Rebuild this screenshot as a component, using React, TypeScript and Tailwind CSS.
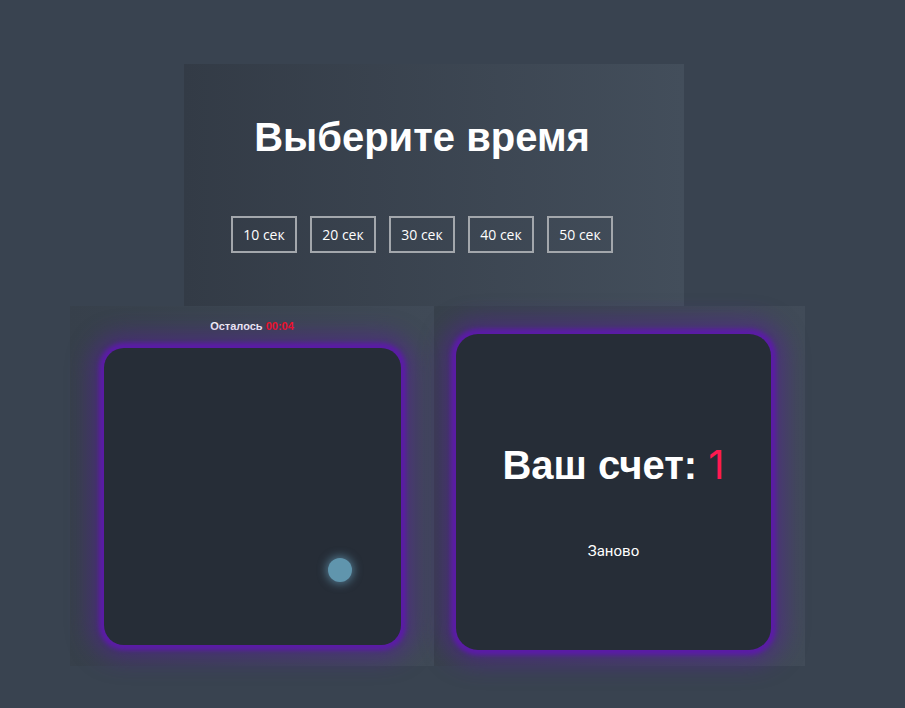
const times = [10, 20, 30, 40, 50];

const glow =
  "shadow-[0_0_4px_5px_#5b1ca6,0_0_22px_14px_rgba(88,28,160,0.5)]";

export default function App() {
  return (
    <div className="min-h-[708px] bg-[#394350] pt-[64px] font-['Liberation_Sans',Arial,sans-serif]">
      <div className="ml-[184px] flex h-[242px] w-[500px] flex-col items-center bg-gradient-to-r from-[#333b46] to-[#434e5b] pr-[24px] pt-[50px]">
        <h1 className="text-[40px] font-bold leading-[46px] text-white">Выберите время</h1>
        <div className="mt-[56px] flex gap-[13px]">
          {times.map((t) => (
            <button
              key={t}
              className="flex h-[37px] w-[66px] items-center justify-center border-2 border-[#a3a7ac] font-['Open_Sans',sans-serif] text-[14px] text-white"
            >
              {t} сек
            </button>
          ))}
        </div>
      </div>

      <div className="ml-[70px] flex">
        <div className="flex h-[360px] w-[364px] flex-col items-center bg-gradient-to-r from-[#37404b] to-[#404a57] pt-[14px]">
          <p className="text-[11px] font-bold leading-[13px] text-white">
            Осталось <span className="text-[#ff1020]">00:04</span>
          </p>
          <div className={`relative mt-[15px] h-[297px] w-[297px] rounded-[20px] bg-[#262d37] ${glow}`}>
            <div className="absolute left-[224px] top-[210px] h-[24px] w-[24px] rounded-full bg-[#6095ad] shadow-[0_0_8px_2px_rgba(110,170,200,0.55)]" />
          </div>
        </div>

        <div className="h-[360px] w-[371px] bg-gradient-to-r from-[#38414c] to-[#414b58] pl-[22px] pt-[28px]">
          <div className={`flex h-[316px] w-[315px] flex-col items-center rounded-[22px] bg-[#262d37] pt-[108px] ${glow}`}>
            <h2 className="text-[40px] font-bold leading-[46px] text-white">
              Ваш счет: <span className="font-['Inter',sans-serif] font-normal text-[#ff1a50]">1</span>
            </h2>
            <button className="mt-[52px] font-['Roboto',sans-serif] text-[15px] text-white">Заново</button>
          </div>
        </div>
      </div>
    </div>
  );
}
